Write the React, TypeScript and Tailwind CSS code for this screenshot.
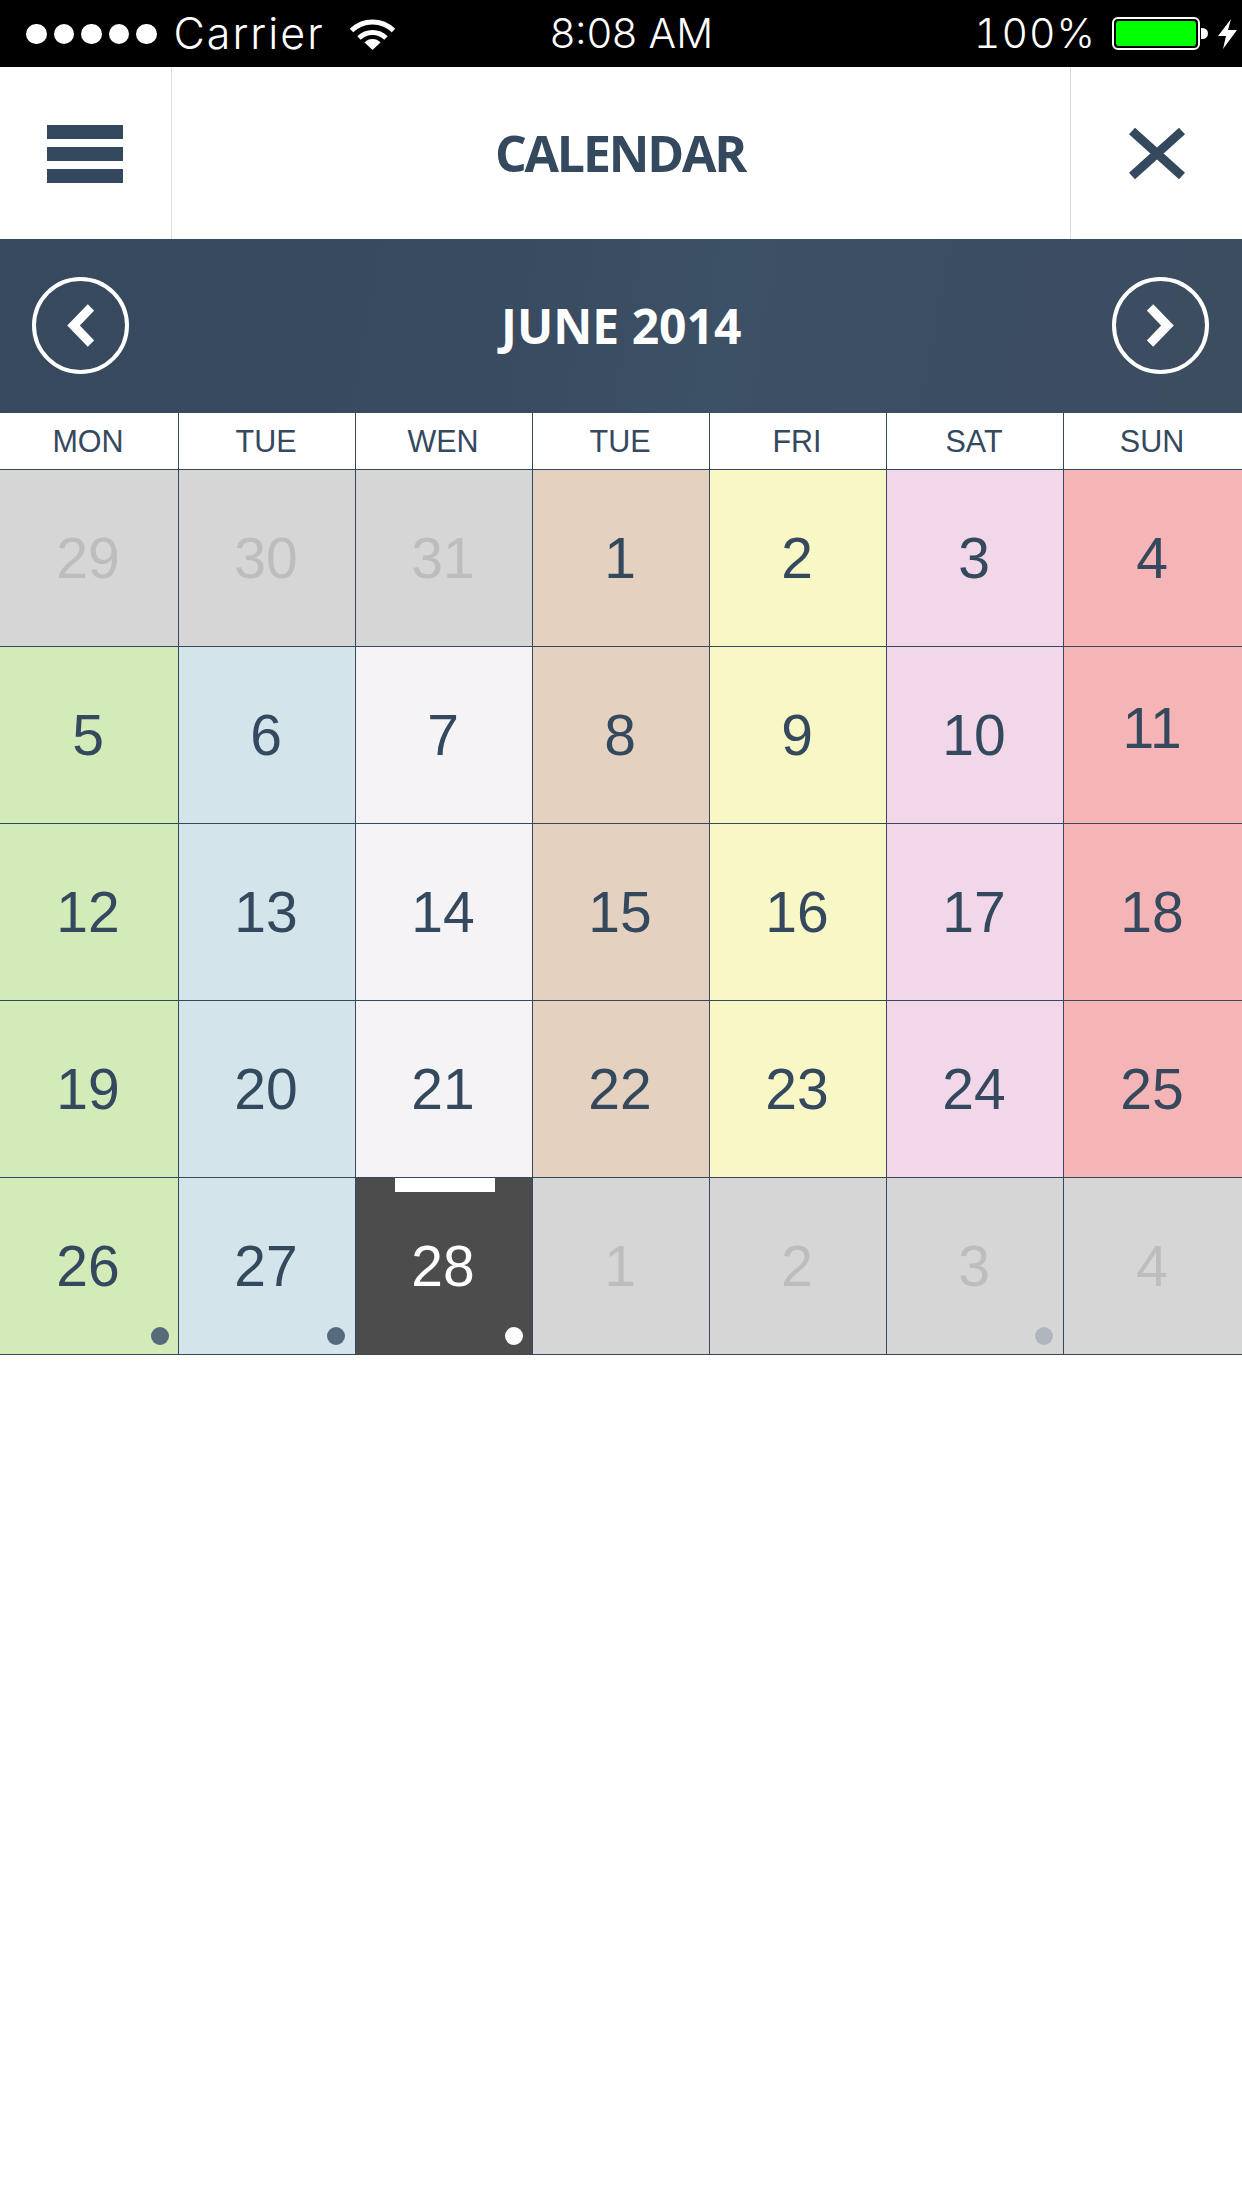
import React from "react";

const inter = "font-['Inter',Arial,sans-serif] font-light";
const open = "font-['Open_Sans',sans-serif]";

type Cell = { n: number; bg: string; muted?: boolean; dot?: string; dotRight?: string; today?: boolean; up?: boolean };

const G = "bg-[#d6d6d6]";
const BR = "bg-[#e5d1bf]";
const Y = "bg-[#f8f7c6]";
const P = "bg-[#f2d7e9]";
const R = "bg-[#f5b4b6]";
const GR = "bg-[#d2ebb8]";
const BL = "bg-[#d3e5eb]";
const W = "bg-[#f5f3f5]";

const cells: Cell[] = [
  { n: 29, bg: G, muted: true }, { n: 30, bg: G, muted: true }, { n: 31, bg: G, muted: true },
  { n: 1, bg: BR }, { n: 2, bg: Y }, { n: 3, bg: P }, { n: 4, bg: R },
  { n: 5, bg: GR }, { n: 6, bg: BL }, { n: 7, bg: W }, { n: 8, bg: BR }, { n: 9, bg: Y }, { n: 10, bg: P }, { n: 11, bg: R, up: true },
  { n: 12, bg: GR }, { n: 13, bg: BL }, { n: 14, bg: W }, { n: 15, bg: BR }, { n: 16, bg: Y }, { n: 17, bg: P }, { n: 18, bg: R },
  { n: 19, bg: GR }, { n: 20, bg: BL }, { n: 21, bg: W }, { n: 22, bg: BR }, { n: 23, bg: Y }, { n: 24, bg: P }, { n: 25, bg: R },
  { n: 26, bg: GR, dot: "bg-[#566a78]", dotRight: "right-[9px]" }, { n: 27, bg: BL, dot: "bg-[#566b80]", dotRight: "right-[10px]" }, { n: 28, bg: "bg-[#4c4c4c]", today: true, dot: "bg-white", dotRight: "right-[9px]" },
  { n: 1, bg: G, muted: true }, { n: 2, bg: G, muted: true }, { n: 3, bg: G, muted: true, dot: "bg-[#b0b6bd]", dotRight: "right-[10px]" }, { n: 4, bg: G, muted: true },
];

const days = ["MON", "TUE", "WEN", "TUE", "FRI", "SAT", "SUN"];
const gridCols = "grid grid-cols-[179px_177px_177px_177px_177px_177px_178px]";

function Wifi() {
  return (
    <svg width="47" height="31" viewBox="0 0 47 31" className="mt-[1px]">
      <path d="M2.5 11.5 A30 30 0 0 1 44.5 11.5" fill="none" stroke="#fff" strokeWidth="5" />
      <path d="M10 19 A19.5 19.5 0 0 1 37 19" fill="none" stroke="#fff" strokeWidth="5" />
      <path d="M15.5 23.5 A11 11 0 0 1 31.5 23.5 L23.5 31 Z" fill="#fff" />
    </svg>
  );
}

function Bolt() {
  return (
    <svg width="19" height="30" viewBox="0 0 19 30" className="ml-[10px]">
      <path d="M13 0 L0 17 H8 L5 30 L19 11 H10 Z" fill="#fff" />
    </svg>
  );
}

function Chevron({ right }: { right?: boolean }) {
  return (
    <svg width="27" height="43" viewBox="0 0 27 43" className={right ? "-scale-x-100" : ""}>
      <polyline points="24,3.5 6.5,21.5 24,39.5" fill="none" stroke="#fff" strokeWidth="9" />
    </svg>
  );
}

function NavButton({ right }: { right?: boolean }) {
  return (
    <div className="w-[97px] h-[97px] rounded-full border-4 border-white flex items-center justify-center shrink-0">
      <Chevron right={right} />
    </div>
  );
}

export default function App() {
  return (
    <div className="w-[1242px] h-[2208px] bg-white overflow-hidden font-['Liberation_Sans',Arial,sans-serif]">
      {/* status bar */}
      <div className={`h-[67px] bg-black text-white flex items-center text-[41px] leading-none ${inter}`}>
        <div className="w-[550px] pl-[26px] flex items-center">
          <div className="flex gap-[7px] w-[147.5px]">
            {[0, 1, 2, 3, 4].map((i) => (
              <div key={i} className="w-[20.5px] h-[20px] rounded-full bg-white" />
            ))}
          </div>
          <span className="w-[175.5px] text-[43px] tracking-[2px]">Carrier</span>
          <Wifi />
        </div>
        <span>8:08 AM</span>
        <div className="ml-auto pr-[5px] flex items-center">
          <span className="tabular-nums tracking-[1px]">100%</span>
          <div className="ml-[16px] w-[88px] h-[33px] rounded-[6px] border-2 border-white p-[2px]">
            <div className="w-full h-full bg-[#00ff00] rounded-[3px]" />
          </div>
          <div className="ml-[1px] w-[7px] h-[11px] bg-white rounded-r-full" />
          <Bolt />
        </div>
      </div>

      {/* title bar */}
      <div className="h-[172px] flex bg-white">
        <div className="w-[172px] border-r border-[#dddddd] flex flex-col items-center justify-center gap-2 pt-[2px] pr-[1px]">
          <div className="w-[76px] h-[14px] bg-[#34495e]" />
          <div className="w-[76px] h-[14px] bg-[#34495e]" />
          <div className="w-[76px] h-[14px] bg-[#34495e]" />
        </div>
        <div className={`flex-1 flex items-center justify-center text-[#34495e] text-[50px] tracking-[-2.2px] font-bold pr-[2px] ${open}`}>
          CALENDAR
        </div>
        <div className="w-[172px] border-l border-[#dddddd] flex items-center justify-center">
          <svg width="58" height="53" viewBox="0 0 58 53">
            <path d="M4 4 L54 49 M54 4 L4 49" fill="none" stroke="#34495e" strokeWidth="9" />
          </svg>
        </div>
      </div>

      {/* month bar */}
      <div className="h-[174px] pl-[32px] pr-[32.5px] pb-[1px] flex items-center justify-between bg-[linear-gradient(100deg,#36495d_0%,#384b60_40%,#3c5066_58%,#3b4d63_78%,#3d4d60_100%)]">
        <NavButton />
        <div className={`text-white text-[48px] font-bold pl-[1px] ${open}`}>JUNE 2014</div>
        <NavButton right />
      </div>

      {/* weekdays */}
      <div className={`${gridCols} h-[57px] border-b border-[#34495e]`}>
        {days.map((d, i) => (
          <div
            key={i}
            className={`flex items-center justify-center text-[30.5px] text-[#34495e] pr-[2px] pt-[2px] ${i < 6 ? "border-r border-[#34495e]" : ""}`}
          >
            {d}
          </div>
        ))}
      </div>

      {/* days */}
      <div className={gridCols}>
        {cells.map((c, i) => (
          <div
            key={i}
            className={`relative h-[177px] border-b border-[#34495e] flex items-center justify-center text-[57px] leading-none pr-[2px] ${c.bg} ${
              i % 7 < 6 ? "border-r" : ""
            } ${c.muted ? "text-[#bdbdbd]" : c.today ? "text-white" : "text-[#34495e]"} ${c.up ? "pb-[14px]" : ""}`}
          >
            {c.n}
            {c.today && <div className="absolute top-0 left-[39px] w-[100px] h-[14px] bg-white" />}
            {c.dot && <div className={`absolute bottom-[9px] w-[18px] h-[18px] rounded-full ${c.dotRight} ${c.dot}`} />}
          </div>
        ))}
      </div>
    </div>
  );
}
